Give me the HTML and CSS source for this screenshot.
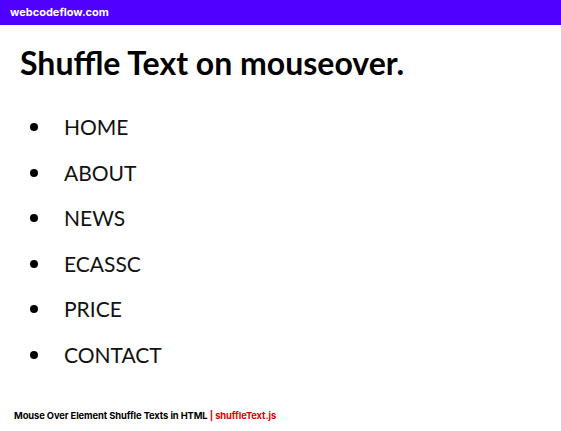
FILE: index.html
```html
<!DOCTYPE html>
<html>
<head>
<meta charset="utf-8">
<link rel="stylesheet" href="styles.css">
</head>
<body>
<div class="topbar">webcodeflow.com</div>
<main class="content">
  <h1 class="title">Shuffle Text on mouseover.</h1>
  <ul class="menu">
    <li>HOME</li>
    <li>ABOUT</li>
    <li>NEWS</li>
    <li>ECASSC</li>
    <li>PRICE</li>
    <li>CONTACT</li>
  </ul>
</main>
<footer class="footer">Mouse Over Element Shuffle Texts in HTML <span class="accent">| shuffleText.js</span></footer>
</body>
</html>
```
FILE: styles.css
```css
html, body {
  margin: 0;
  padding: 0;
  background: #fff;
}
body {
  width: 561px;
  height: 431px;
  position: relative;
  overflow: hidden;
}
.topbar {
  height: 25px;
  background: #5000ff;
  color: #fff;
  font-family: Inter, "Liberation Sans", sans-serif;
  font-weight: 700;
  font-size: 11px;
  line-height: 25px;
  padding-left: 10px;
}
.content {
  padding: 0 20px;
}
.title {
  margin: 18px 0 0 0;
  font-family: Lato, sans-serif;
  font-weight: 700;
  font-size: 32px;
  line-height: 40px;
  color: #000;
}
.menu {
  margin: 31px 0 0 0;
  padding: 0;
  list-style: none;
  font-family: Lato, sans-serif;
  font-size: 21px;
  color: #111;
}
.menu li {
  display: flex;
  align-items: flex-start;
  height: 45.5px;
  line-height: 25px;
}
.menu li::before {
  content: "";
  width: 8px;
  height: 8px;
  border-radius: 50%;
  background: #000;
  margin: 9px 26px 0 10px;
  flex: none;
}
.footer {
  position: absolute;
  left: 14px;
  top: 410px;
  font-family: Inter, "Liberation Sans", sans-serif;
  font-weight: 700;
  font-size: 9.4px;
  color: #000;
  letter-spacing: -0.1px;
}
.accent {
  color: #e00000;
}
```
